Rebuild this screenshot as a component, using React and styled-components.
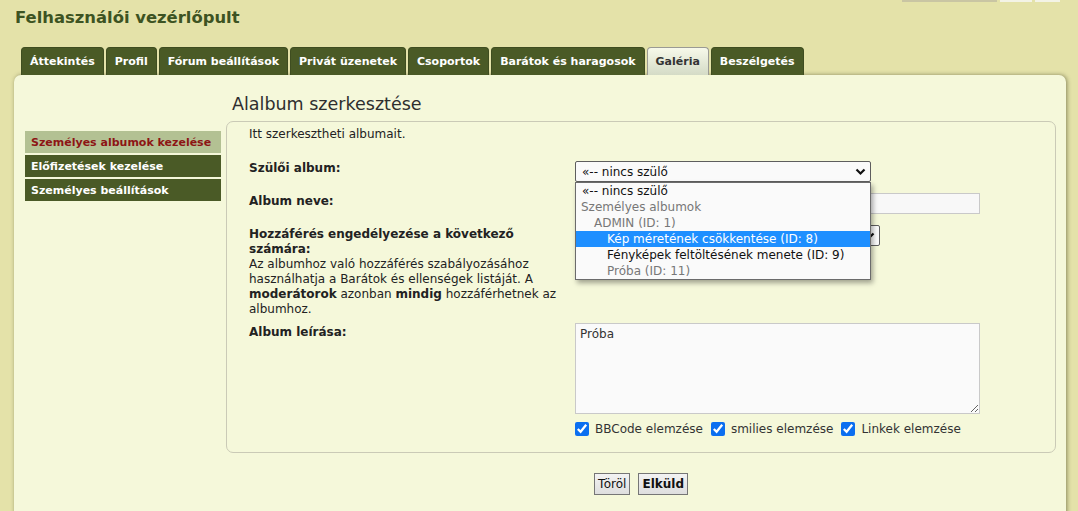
import React from "react";
import styled, { createGlobalStyle } from "styled-components";

const GlobalStyle = createGlobalStyle`
  html, body {
    margin: 0;
    padding: 0;
    background: #e4e2a9;
    font-family: "DejaVu Sans", Verdana, sans-serif;
    color: #222;
    overflow: hidden;
  }
`;

const Page = styled.div`
  width: 1078px;
  height: 511px;
`;

const Header = styled.div`
  display: flex;
  justify-content: space-between;
  align-items: flex-start;
  padding: 0 18px 0 15px;
  height: 47px;
`;

const Title = styled.h1`
  margin: 8px 0 0;
  font-size: 16.4px;
  line-height: 20px;
  font-weight: bold;
  color: #3d5322;
`;

const SearchStub = styled.div`
  display: flex;
  gap: 3px;
  height: 2px;
`;

const StubPart = styled.div`
  width: ${(p) => p.$w}px;
  height: 2px;
  background: ${(p) => p.$c};
`;

const Tabs = styled.ul`
  display: flex;
  gap: 2px;
  list-style: none;
  margin: 0;
  padding: 0 0 0 21px;
  height: 28px;
`;

const Tab = styled.li`
  height: 27px;
  padding: 0 8px;
  display: flex;
  align-items: center;
  font-size: 11px;
  font-weight: bold;
  border-radius: 4px 4px 0 0;
  color: ${(p) => (p.$active ? "#333" : "#fff")};
  background: ${(p) =>
    p.$active ? "linear-gradient(#f7f9ea, #d4dbc6)" : "#4a5a26"};
  border: 1px solid ${(p) => (p.$active ? "#9a9a94" : "#3f4d20")};
  border-bottom: none;
  position: relative;
  z-index: ${(p) => (p.$active ? 2 : 0)};
`;

const Panel = styled.div`
  margin: 0 12px 0 14px;
  background: #f5f8da;
  border-radius: 7px 7px 0 0;
  box-shadow: 1px 0 4px rgba(60, 60, 30, 0.55);
  padding: 14px 10px 40px 11px;
  display: flex;
  height: 500px;
`;

const Sidebar = styled.ul`
  list-style: none;
  margin: 42px 0 0;
  padding: 0;
  width: 196px;
  display: flex;
  flex-direction: column;
  gap: 1px;
`;

const MenuItem = styled.li`
  height: 22px;
  display: flex;
  align-items: center;
  padding-left: 6px;
  font-size: 11px;
  font-weight: bold;
  background: ${(p) => (p.$active ? "#b3c193" : "#4a5a26")};
  color: ${(p) => (p.$active ? "#8d1515" : "#fff")};
  margin-top: ${(p) => (p.$active ? 0 : 1)}px;
`;

const Main = styled.div`
  flex: 1;
  margin-left: 5px;
`;

const Heading = styled.h2`
  margin: 4px 0 6px 6px;
  font-size: 17.5px;
  line-height: 22px;
  font-weight: normal;
  color: #2e2e2e;
`;

const FormBox = styled.div`
  border: 1px solid #cacab6;
  border-radius: 7px;
  padding: 4px 22px 15px 22px;
`;

const Intro = styled.p`
  margin: 0;
  font-size: 12px;
  line-height: 16px;
`;

const Row = styled.div`
  display: grid;
  grid-template-columns: 326px 1fr;
  align-items: start;
  margin-top: ${(p) => p.$mt}px;
`;

const Label = styled.div`
  font-size: 12px;
  line-height: 14.5px;
  font-weight: bold;
  padding-top: ${(p) => p.$pt || 0}px;
`;

const Explain = styled.p`
  font-size: 12px;
  line-height: 15px;
  font-weight: normal;
  margin: 1px 0 0;
  padding-right: 8px;

  b {
    font-weight: bold;
  }
`;

const Field = styled.div`
  position: relative;
`;

const SelectBox = styled.div`
  width: ${(p) => p.$w}px;
  height: 21px;
  box-sizing: border-box;
  border: 1px solid #5e5e5e;
  border-radius: 2px;
  background: #fafafa;
  display: flex;
  align-items: center;
  justify-content: space-between;
  padding: 0 4px 0 6px;
  font-size: 12px;
  color: #111;
`;

const TextInput = styled.div`
  width: 405px;
  height: 21px;
  box-sizing: border-box;
  border: 1px solid #c9c9c9;
  background: #f8f8f8;
`;

const DropList = styled.ul`
  position: absolute;
  left: 0;
  top: 21px;
  width: 296px;
  box-sizing: border-box;
  margin: 0;
  padding: 0;
  list-style: none;
  background: #fafafa;
  border: 1px solid #6b6b6b;
  box-shadow: 2px 3px 5px rgba(0, 0, 0, 0.35);
  z-index: 5;
`;

const Option = styled.li`
  height: 16px;
  line-height: 16px;
  font-size: 12px;
  padding-left: ${(p) => p.$indent}px;
  color: ${(p) => (p.$selected ? "#fff" : p.$muted ? "#777" : "#111")};
  background: ${(p) => (p.$selected ? "#1e8fff" : "transparent")};
  white-space: nowrap;
`;

const TextArea = styled.textarea`
  display: block;
  width: 405px;
  height: 91px;
  box-sizing: border-box;
  border: 1px solid #c9c9c9;
  background: #fafafa;
  font-family: "DejaVu Sans", Verdana, sans-serif;
  font-size: 12px;
  color: #333;
  padding: 3px 4px;
  margin: 0;
  outline: none;
`;

const Checks = styled.div`
  display: flex;
  align-items: center;
  margin-top: 7px;
  height: 16px;
  font-size: 12px;
  color: #333;
`;

const Check = styled.label`
  display: flex;
  align-items: center;
  margin-right: 8px;

  input {
    width: 14px;
    height: 14px;
    margin: 0 6px 0 0;
    accent-color: #0b6ff0;
  }
`;

const Buttons = styled.div`
  display: flex;
  justify-content: center;
  gap: 8px;
  margin-top: 20px;
`;

const Button = styled.button`
  height: 22px;
  padding: 0 3px;
  font-family: "DejaVu Sans", Verdana, sans-serif;
  font-size: 12px;
  font-weight: ${(p) => (p.$bold ? "bold" : "normal")};
  color: #111;
  border: 1px solid #767676;
  background: linear-gradient(#f3f3f3, #dedede);
  border-radius: 0;
`;

const Chevron = () => (
  <svg width="11" height="8" viewBox="0 0 11 8">
    <polyline
      points="1.5,1.5 5.5,5.5 9.5,1.5"
      fill="none"
      stroke="#111"
      strokeWidth="2.2"
    />
  </svg>
);

const tabs = [
  "Áttekintés",
  "Profil",
  "Fórum beállítások",
  "Privát üzenetek",
  "Csoportok",
  "Barátok és haragosok",
  "Galéria",
  "Beszélgetés",
];

const menu = [
  "Személyes albumok kezelése",
  "Előfizetések kezelése",
  "Személyes beállítások",
];

const options = [
  { text: "«-- nincs szülő", indent: 6 },
  { text: "Személyes albumok", indent: 5, muted: true },
  { text: "ADMIN (ID: 1)", indent: 18, muted: true },
  { text: "Kép méretének csökkentése (ID: 8)", indent: 31, selected: true },
  { text: "Fényképek feltöltésének menete (ID: 9)", indent: 31 },
  { text: "Próba (ID: 11)", indent: 31, muted: true },
];

export default function App() {
  return (
    <Page>
      <GlobalStyle />
      <Header>
        <Title>Felhasználói vezérlőpult</Title>
        <SearchStub>
          <StubPart $w={95} $c="#c9c5a3" />
          <StubPart $w={32} $c="#f3f3e6" />
          <StubPart $w={25} $c="#f3f3e6" />
        </SearchStub>
      </Header>
      <Tabs>
        {tabs.map((t) => (
          <Tab key={t} $active={t === "Galéria"}>
            {t}
          </Tab>
        ))}
      </Tabs>
      <Panel>
        <Sidebar>
          {menu.map((m, i) => (
            <MenuItem key={m} $active={i === 0}>
              {m}
            </MenuItem>
          ))}
        </Sidebar>
        <Main>
          <Heading>Alalbum szerkesztése</Heading>
          <FormBox>
            <Intro>Itt szerkesztheti albumait.</Intro>
            <Row $mt={19}>
              <Label>Szülői album:</Label>
              <Field>
                <SelectBox $w={296}>
                  <span>«-- nincs szülő</span>
                  <Chevron />
                </SelectBox>
                <DropList>
                  {options.map((o) => (
                    <Option
                      key={o.text}
                      $indent={o.indent}
                      $muted={o.muted}
                      $selected={o.selected}
                    >
                      {o.text}
                    </Option>
                  ))}
                </DropList>
              </Field>
            </Row>
            <Row $mt={11}>
              <Label $pt={1}>Album neve:</Label>
              <Field>
                <TextInput />
              </Field>
            </Row>
            <Row $mt={11}>
              <Label $pt={2}>
                Hozzáférés engedélyezése a következő számára:
                <Explain>
                  Az albumhoz való hozzáférés szabályozásához használhatja a
                  Barátok és ellenségek listáját. A <b>moderátorok</b> azonban{" "}
                  <b>mindig</b> hozzáférhetnek az albumhoz.
                </Explain>
              </Label>
              <Field>
                <SelectBox $w={305}>
                  <span>Mindenki</span>
                  <Chevron />
                </SelectBox>
              </Field>
            </Row>
            <Row $mt={6}>
              <Label $pt={2}>Album leírása:</Label>
              <Field>
                <TextArea readOnly defaultValue="Próba" />
                <Checks>
                  <Check>
                    <input type="checkbox" defaultChecked />
                    BBCode elemzése
                  </Check>
                  <Check>
                    <input type="checkbox" defaultChecked />
                    smilies elemzése
                  </Check>
                  <Check>
                    <input type="checkbox" defaultChecked />
                    Linkek elemzése
                  </Check>
                </Checks>
              </Field>
            </Row>
          </FormBox>
          <Buttons>
            <Button>Töröl</Button>
            <Button $bold>Elküld</Button>
          </Buttons>
        </Main>
      </Panel>
    </Page>
  );
}
